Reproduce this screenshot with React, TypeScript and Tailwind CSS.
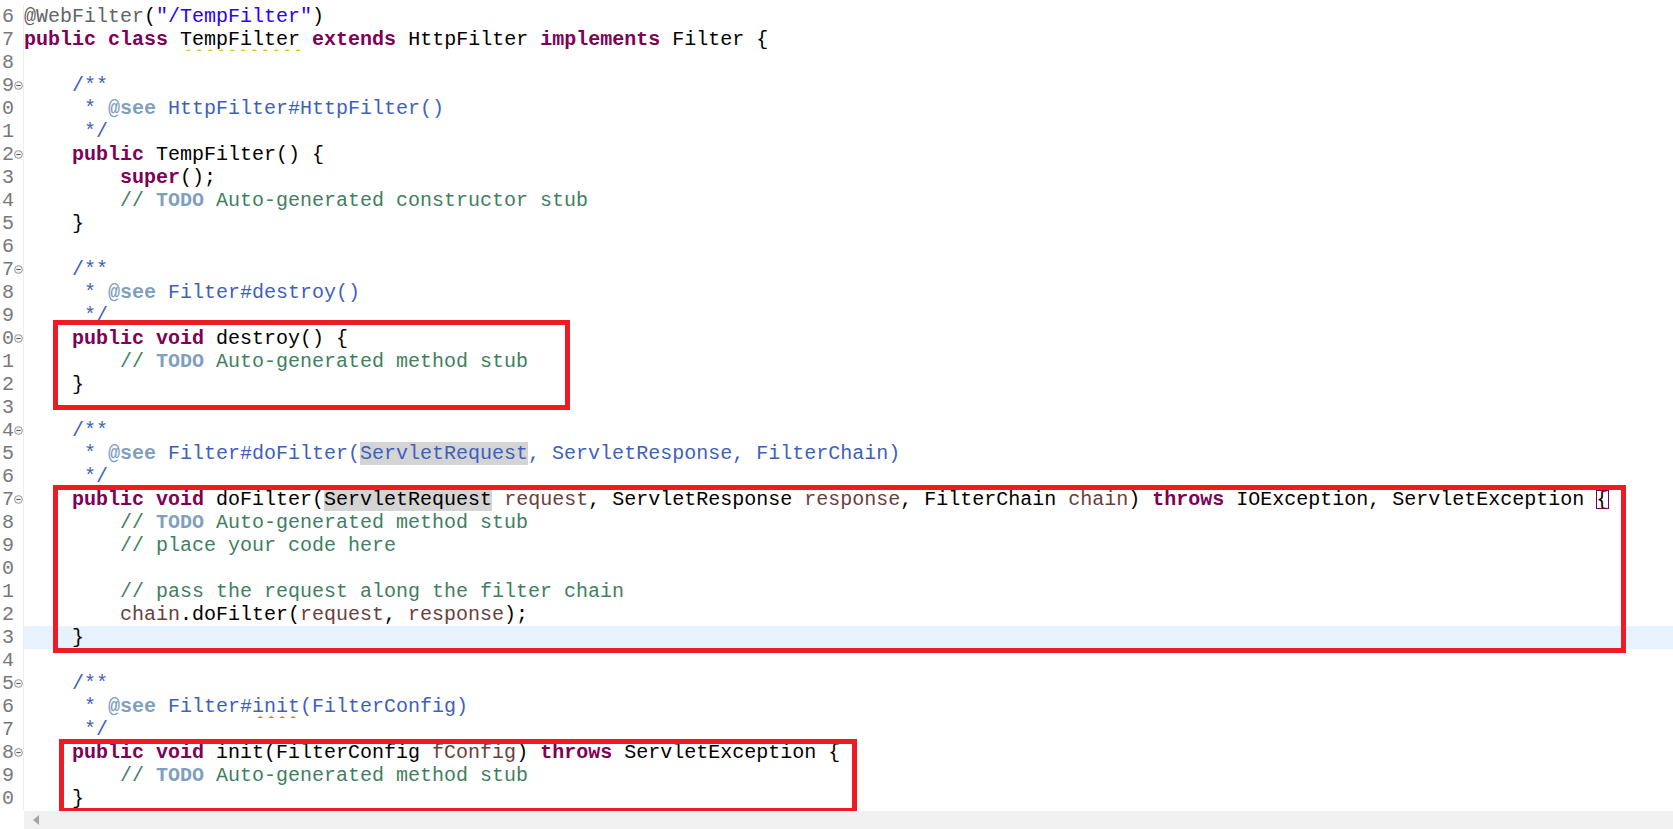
import React from "react";

type Seg = [string, string?];
type Line = { n: number; fold?: boolean; current?: boolean; segs: Seg[] };

const K = "font-bold text-[#7f0055]";
const A = "text-[#646464]";
const S = "text-[#2a00ff]";
const J = "text-[#3f5fbf]";
const T = "font-bold text-[#7f9fbf]";
const C = "text-[#3f7f5f]";
const P = "text-[#6a3e3e]";
const N = "text-black";
const HL = "bg-[#d4d4d4] text-black";
const JHL = "bg-[#d4d4d4] text-[#3f5fbf]";
const WARN = "text-black underline decoration-wavy decoration-[#e8c22a] decoration-[1.5px] underline-offset-[4px]";
const SPELL = "text-[#3f5fbf] underline decoration-wavy decoration-[#f06a2a] decoration-[1.5px] underline-offset-[4px]";
const BR = "BRACKET";

const lines: Line[] = [
  { n: 16, segs: [["@WebFilter", A], ["(", N], ['"/TempFilter"', S], [")", N]] },
  {
    n: 17,
    segs: [
      ["public", K], [" ", N], ["class", K], [" ", N], ["TempFilter", WARN], [" ", N], ["extends", K],
      [" HttpFilter ", N], ["implements", K], [" Filter {", N],
    ],
  },
  { n: 18, segs: [] },
  { n: 19, fold: true, segs: [["    /**", J]] },
  { n: 20, segs: [["     * ", J], ["@see", T], [" HttpFilter#HttpFilter()", J]] },
  { n: 21, segs: [["     */", J]] },
  { n: 22, fold: true, segs: [["    ", N], ["public", K], [" TempFilter() {", N]] },
  { n: 23, segs: [["        ", N], ["super", K], ["();", N]] },
  { n: 24, segs: [["        // ", C], ["TODO", T], [" Auto-generated constructor stub", C]] },
  { n: 25, segs: [["    }", N]] },
  { n: 26, segs: [] },
  { n: 27, fold: true, segs: [["    /**", J]] },
  { n: 28, segs: [["     * ", J], ["@see", T], [" Filter#destroy()", J]] },
  { n: 29, segs: [["     */", J]] },
  { n: 30, fold: true, segs: [["    ", N], ["public", K], [" ", N], ["void", K], [" destroy() {", N]] },
  { n: 31, segs: [["        // ", C], ["TODO", T], [" Auto-generated method stub", C]] },
  { n: 32, segs: [["    }", N]] },
  { n: 33, segs: [] },
  { n: 34, fold: true, segs: [["    /**", J]] },
  {
    n: 35,
    segs: [
      ["     * ", J], ["@see", T], [" Filter#doFilter(", J], ["ServletRequest", JHL],
      [", ServletResponse, FilterChain)", J],
    ],
  },
  { n: 36, segs: [["     */", J]] },
  {
    n: 37,
    fold: true,
    segs: [
      ["    ", N], ["public", K], [" ", N], ["void", K], [" doFilter(", N], ["ServletRequest", HL],
      [" ", N], ["request", P], [", ServletResponse ", N], ["response", P], [", FilterChain ", N],
      ["chain", P], [") ", N], ["throws", K], [" IOException, ServletException ", N], ["{", BR],
    ],
  },
  { n: 38, segs: [["        // ", C], ["TODO", T], [" Auto-generated method stub", C]] },
  { n: 39, segs: [["        // place your code here", C]] },
  { n: 40, segs: [] },
  { n: 41, segs: [["        // pass the request along the filter chain", C]] },
  {
    n: 42,
    segs: [["        ", N], ["chain", P], [".doFilter(", N], ["request", P], [", ", N], ["response", P], [");", N]],
  },
  { n: 43, current: true, segs: [["    }", N]] },
  { n: 44, segs: [] },
  { n: 45, fold: true, segs: [["    /**", J]] },
  {
    n: 46,
    segs: [["     * ", J], ["@see", T], [" Filter#", J], ["init", SPELL], ["(FilterConfig)", J]],
  },
  { n: 47, segs: [["     */", J]] },
  {
    n: 48,
    fold: true,
    segs: [
      ["    ", N], ["public", K], [" ", N], ["void", K], [" init(FilterConfig ", N], ["fConfig", P],
      [") ", N], ["throws", K], [" ServletException {", N],
    ],
  },
  { n: 49, segs: [["        // ", C], ["TODO", T], [" Auto-generated method stub", C]] },
  { n: 50, segs: [["    }", N]] },
];

function FoldIcon() {
  return (
    <svg width="9" height="9" viewBox="0 0 9 9" className="block">
      <circle cx="4.5" cy="4.5" r="3.9" fill="#f2f2f2" stroke="#8a8a8a" strokeWidth="0.9" />
      <line x1="2.4" y1="4.5" x2="6.6" y2="4.5" stroke="#5a5a5a" strokeWidth="1" />
    </svg>
  );
}

function CodeLine({ line }: { line: Line }) {
  return (
    <div className="flex h-[23px] leading-[23px]">
      <div className="flex w-[24px] shrink-0 border-r border-[#ededed] bg-white">
        <div className="flex w-[14px] shrink-0 justify-end text-[#787878]">{line.n % 10}</div>
        <div className="flex w-[9px] shrink-0 items-center justify-center">{line.fold ? <FoldIcon /> : null}</div>
      </div>
      <div className={`flex-1 whitespace-pre ${line.current ? "bg-[#e8f2fe]" : "bg-white"}`}>
        {line.segs.map((s, i) =>
          s[1] === BR ? (
            <span key={i} className="relative text-black">
              {s[0]}
              <span className="absolute left-0 top-[2px] h-[19px] w-[13px] border border-[#7f0055]" />
            </span>
          ) : (
            <span key={i} className={s[1]}>
              {s[0]}
            </span>
          )
        )}
      </div>
    </div>
  );
}

export default function App() {
  return (
    <div className="flex h-[829px] w-[1673px] flex-col overflow-hidden bg-white font-['Liberation_Mono','Courier_New',monospace] text-[20px]">
      <div className="relative flex-1 overflow-hidden">
        <div className="flex flex-col pt-[5px]">
          {lines.map((l) => (
            <CodeLine key={l.n} line={l} />
          ))}
        </div>
        <div className="absolute left-[53px] top-[320px] h-[90px] w-[517px] border-[5px] border-[#ed1c24]" />
        <div className="absolute left-[53px] top-[485px] h-[168px] w-[1573px] border-[5px] border-[#ed1c24]" />
        <div className="absolute left-[59px] top-[739px] h-[74px] w-[798px] border-[5px] border-[#ed1c24]" />
      </div>
      <div className="flex h-[18px] shrink-0">
        <div className="w-[24px] shrink-0 bg-white" />
        <div className="flex flex-1 items-center bg-[#f0f0f0] pl-[9px]">
          <svg width="7" height="10" viewBox="0 0 7 10">
            <polygon points="6,0 6,10 0,5" fill="#a3a3a3" />
          </svg>
        </div>
      </div>
    </div>
  );
}
